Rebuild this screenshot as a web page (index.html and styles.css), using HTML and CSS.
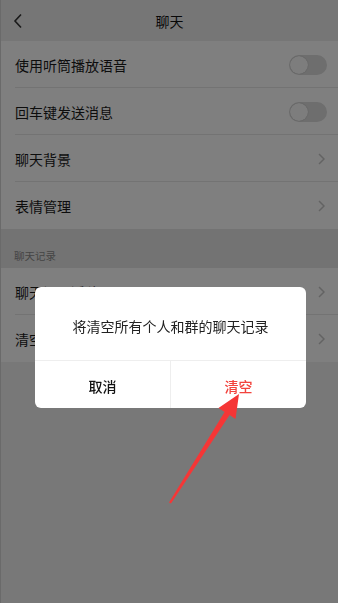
FILE: index.html
```html
<!DOCTYPE html>
<html lang="zh-CN">
<head>
<meta charset="utf-8">
<title>聊天</title>
<link rel="stylesheet" href="styles.css">
</head>
<body>
<div class="page">
  <header class="topbar">
    <svg class="back" width="10" height="16" viewBox="0 0 10 16"><path d="M8 1.5 L2 8 L8 14.5" fill="none" stroke="#333" stroke-width="1.6"/></svg>
    <div class="title">聊天</div>
  </header>
  <div class="group">
    <div class="row"><span class="label">使用听筒播放语音</span><span class="toggle"><span class="knob"></span></span></div>
    <div class="row"><span class="label">回车键发送消息</span><span class="toggle"><span class="knob"></span></span></div>
    <div class="row"><span class="label">聊天背景</span><svg class="chev" width="7" height="12" viewBox="0 0 7 12"><path d="M1 1 L6 6 L1 11" fill="none" stroke="#c7c7c7" stroke-width="1.5"/></svg></div>
    <div class="row last"><span class="label">表情管理</span><svg class="chev" width="7" height="12" viewBox="0 0 7 12"><path d="M1 1 L6 6 L1 11" fill="none" stroke="#c7c7c7" stroke-width="1.5"/></svg></div>
  </div>
  <div class="section">聊天记录</div>
  <div class="group">
    <div class="row"><span class="label">聊天记录迁移</span><svg class="chev" width="7" height="12" viewBox="0 0 7 12"><path d="M1 1 L6 6 L1 11" fill="none" stroke="#c7c7c7" stroke-width="1.5"/></svg></div>
    <div class="row last"><span class="label">清空聊天记录</span><svg class="chev" width="7" height="12" viewBox="0 0 7 12"><path d="M1 1 L6 6 L1 11" fill="none" stroke="#c7c7c7" stroke-width="1.5"/></svg></div>
  </div>
</div>
<div class="mask">
  <div class="dialog">
    <div class="message">将清空所有个人和群的聊天记录</div>
    <div class="actions">
      <div class="btn cancel">取消</div>
      <div class="btn confirm">清空</div>
    </div>
  </div>
</div>
<svg class="arrow" width="338" height="603" viewBox="0 0 338 603">
  <polygon points="239,394 235.5,419 229.6,415.1 171,503.5 169,502.5 224.6,411.9 218.5,408" fill="#f53636"/>
</svg>
</body>
</html>
```
FILE: styles.css
```css
* { box-sizing: border-box; }
html, body { margin: 0; padding: 0; }
body {
  width: 338px;
  height: 603px;
  overflow: hidden;
  background: #f1f1f1;
  font-family: "Noto Sans CJK SC", "Noto Sans", sans-serif;
  color: #1a1a1a;
  border-left: 1px solid #d4d4d4;
}
.page { display: flex; flex-direction: column; }
.topbar {
  height: 41px;
  background: #ececec;
  display: flex;
  align-items: center;
  justify-content: center;
  position: relative;
}
.back { position: absolute; left: 12px; top: 13px; }
.title { font-size: 14px; color: #111; }
.group { background: #fff; }
.row {
  height: 47px;
  display: flex;
  align-items: center;
  justify-content: space-between;
  margin-left: 14px;
  padding-right: 12px;
  padding-top: 1px;
  border-bottom: 1px solid #e6e6e6;
}
.row.last { border-bottom: none; }
.label { font-size: 14px; color: #1a1a1a; }
.toggle {
  width: 38px;
  height: 20px;
  border-radius: 10px;
  background: #dcdcdc;
  display: flex;
  align-items: center;
  padding-left: 1px;
  margin-right: -1px;
}
.knob {
  width: 18px;
  height: 18px;
  border-radius: 50%;
  background: #fafafa;
  box-shadow: 0 0 1px rgba(0,0,0,0.3);
}
.chev { margin-right: 1px; }
.section {
  height: 39px;
  background: #e7e7e7;
  font-size: 10.5px;
  color: #8a8a8a;
  padding-left: 13px;
  display: flex;
  align-items: center;
  padding-top: 14px;
}
.mask {
  position: fixed;
  inset: 0;
  background: rgba(0,0,0,0.5);
  display: flex;
  justify-content: center;
  align-items: flex-start;
  padding-top: 287px;
  padding-left: 3px;
}
.dialog {
  width: 271px;
  background: #fff;
  border-radius: 6px;
  overflow: hidden;
}
.message {
  height: 74px;
  display: flex;
  align-items: center;
  justify-content: center;
  font-size: 14px;
  color: #222;
  padding-top: 4px;
  border-bottom: 1px solid #eeeeee;
}
.actions { display: flex; height: 47px; }
.btn {
  flex: 1;
  display: flex;
  align-items: center;
  justify-content: center;
  font-size: 14px;
  font-weight: 500;
  padding-top: 3px;
}
.cancel { color: #111; border-right: 1px solid #eeeeee; }
.confirm { color: #f2433d; }
.arrow { position: fixed; left: 0; top: 0; pointer-events: none; }
```
